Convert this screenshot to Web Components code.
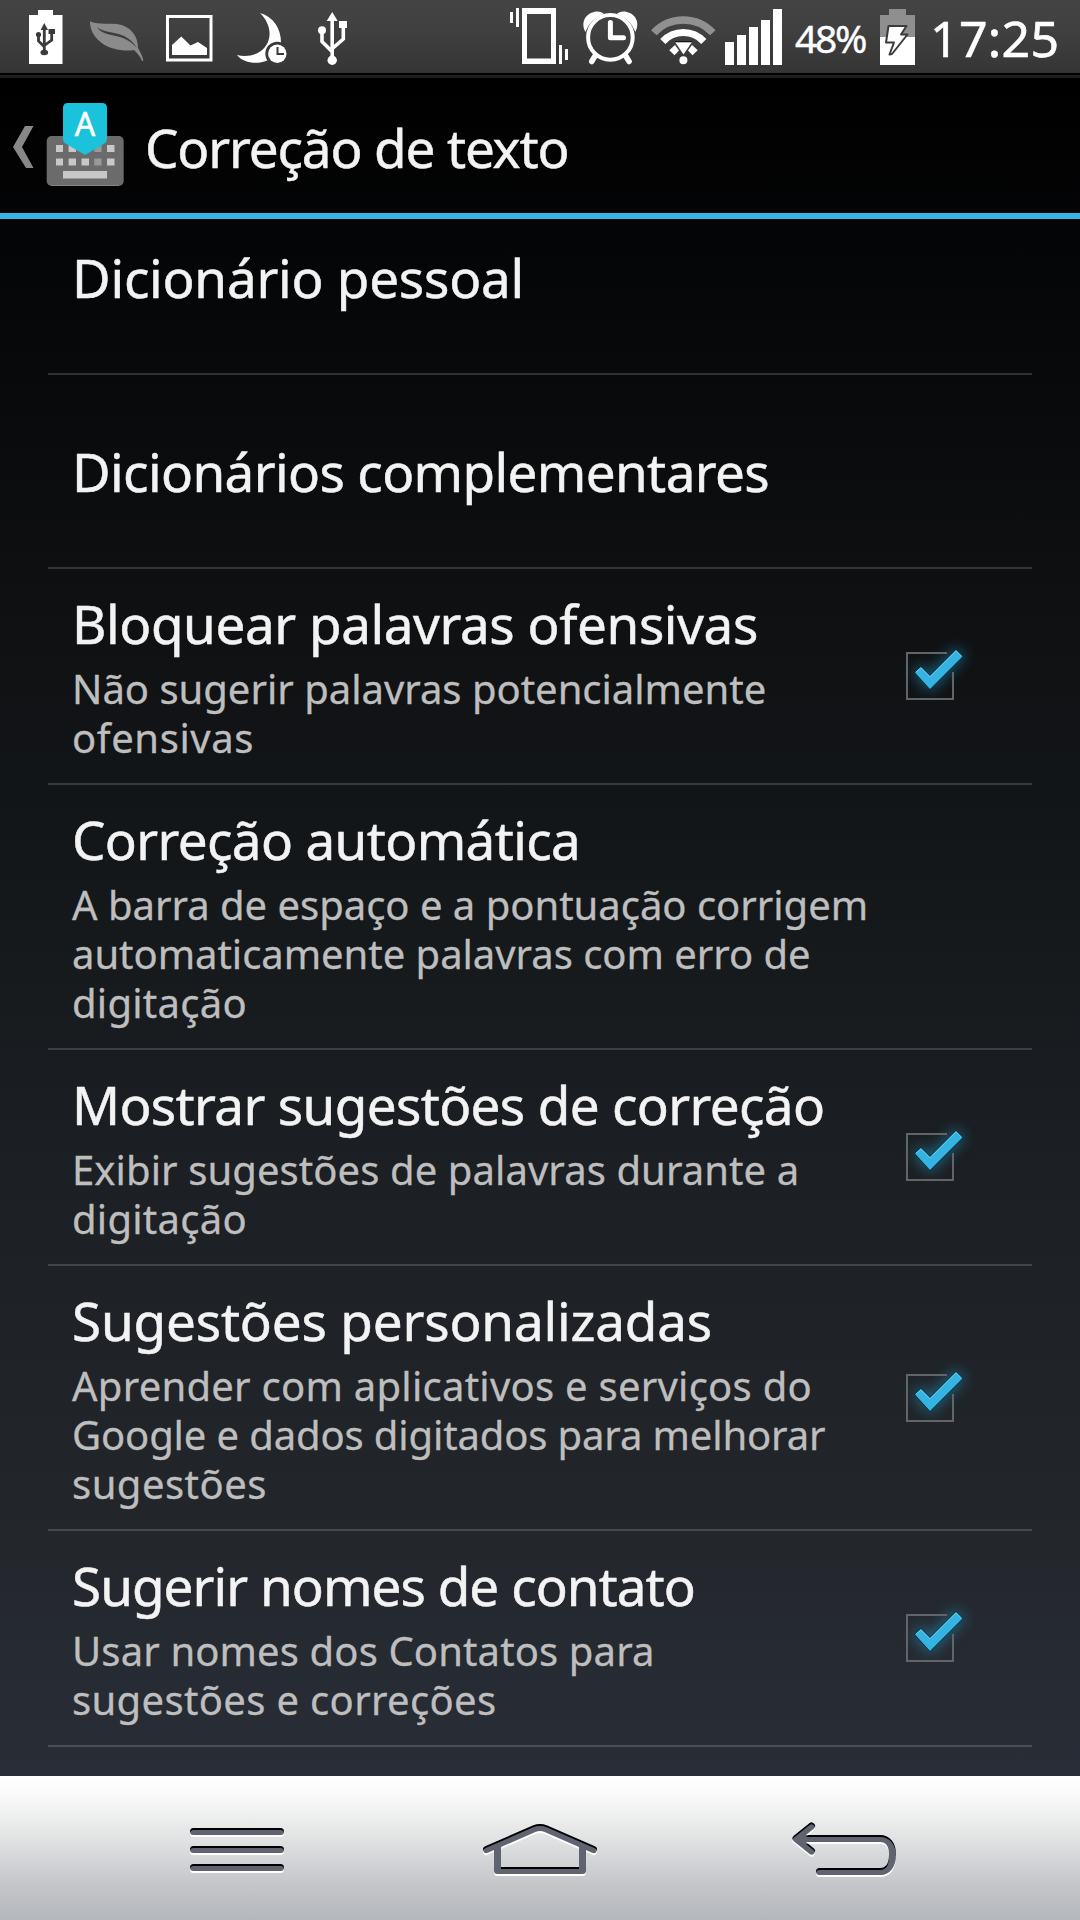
<!DOCTYPE html>
<html lang="pt-BR">
<head>
<meta charset="utf-8">
<title>Correção de texto</title>
<style>
  body{
    margin:0;
    width:1080px;
    height:1920px;
    overflow:hidden;
    background:#000;
    color:#f3f3f3;
    font-family:"Noto Sans", "Open Sans", sans-serif;
    --accent:#33b5e5;
    --muted:#bebebe;
  }
</style>
</head>
<body>
<settings-screen></settings-screen>

<script>
// One line of text, tracked so that its ink ends at the given x offset
class FitLine extends HTMLElement {
  constructor() {
    super();
    this.attachShadow({ mode: 'open' });
  }

  connectedCallback() {
    this.shadowRoot.innerHTML = /*html*/`
      <style>
        :host{ display:block; white-space:nowrap; }
      </style>
      <slot></slot>
    `;
    const text = this.textContent;
    const style = getComputedStyle(this);
    const ctx = document.createElement('canvas').getContext('2d');
    ctx.font = `${style.fontWeight} ${style.fontSize} ${style.fontFamily}`;
    const ink = ctx.measureText(text).actualBoundingBoxRight;
    const gap = (Number(this.getAttribute('end')) - ink) / (text.length - 1);
    this.style.letterSpacing = gap.toFixed(3) + 'px';
  }
}
customElements.define('fit-line', FitLine);

class StatusBar extends HTMLElement {
  constructor() {
    super();
    this.attachShadow({ mode: 'open' });
  }

  static get styles() {
    return /*css*/`
      :host{
        display:flex;
        height:80px;
        box-sizing:border-box;
        background:linear-gradient(#444 0, #404040 30px, #353535 73px, #000 73px, #000 75px, #1f1f1f 75px, #1f1f1f 78px, #000 78px);
        color:#fff;
      }
      svg{ display:block; height:73px; flex:none; fill:#fff; }
      .spacer{ flex:1; }
      .percent{ width:83px; font-size:39px; line-height:76px; padding-left:8px; box-sizing:border-box; -webkit-text-stroke:.4px; }
      .clock{ width:160px; font-size:50px; line-height:76px; padding-left:10px; box-sizing:border-box; -webkit-text-stroke:.6px; }
    `;
  }

  connectedCallback() {
    this.shadowRoot.innerHTML = /*html*/`
      <style>${StatusBar.styles}</style>
      <svg width="80" viewBox="0 0 80 73">
        <path d="M29 15H38V10H53V15H62.5V64H29Z"/>
        <g stroke="#3a3a3a" fill="none" stroke-width="2.8">
          <path d="M44.3 28V52M38.5 34V41L44 46.5M51.7 32V40L45 45"/>
        </g>
        <g fill="#3a3a3a">
          <path d="M44.3 23L48 30H40.6Z"/>
          <circle cx="38.5" cy="34.5" r="2.600"/>
          <rect x="48.5" y="29" width="6.5" height="5"/>
          <ellipse cx="44.3" cy="52.5" rx="3.8" ry="2.8"/>
        </g>
      </svg>
      <svg width="75" viewBox="80 0 75 73">
        <path fill="#8b8b8b" d="M90 21C96 25 107 23 117 24C130 26 138 35 138 48C140 52 143 56 143.300 61L142 61C140 56 137 53 134 50C125 51.500 110 50 100.500 42C93 36 90 29 90 21Z"/>
        <path fill="#3d3d3d" d="M97 27C104 33 114 31.500 124 36C130 39 134 43 137 48C130 41 126 38.500 118 36.500C109 34.500 101 33.500 97 27Z"/>
      </svg>
      <svg width="70" viewBox="155 0 70 73">
        <rect x="167.500" y="16.500" width="43.500" height="43.500" fill="none" stroke="#fff" stroke-width="3"/>
        <path d="M172 55V45L181.300 36.500L190.500 45.500L198 42L207 48V55Z"/>
      </svg>
      <svg width="75" viewBox="225 0 75 73">
        <path d="M260 13C274 17 281 29 281 43L274 58L267 60.500C257 65 243 63 237 55C249 58 262 54 267.500 43C272 33 269 22 260 13Z"/>
        <circle cx="277.300" cy="53.700" r="12" fill="#3a3a3a"/>
        <circle cx="277.300" cy="53.700" r="9.200"/>
        <path d="M277.500 47V54H284" fill="none" stroke="#3a3a3a" stroke-width="2"/>
      </svg>
      <svg width="70" viewBox="300 0 70 73">
        <path d="M332.200 18V60M322 30V41.500L331.500 51M343.300 26V39L333 48" fill="none" stroke="#fff" stroke-width="3.600"/>
        <path d="M332.200 12L337.700 21H326.700Z"/>
        <circle cx="322" cy="30.300" r="4"/>
        <rect x="339" y="21" width="8" height="7"/>
        <circle cx="332.200" cy="60.300" r="4.700"/>
      </svg>
      <div class="spacer"></div>
      <svg width="75" viewBox="500 0 75 73">
        <path fill-rule="evenodd" d="M522 8H556V64H522ZM527 14V58.500H551V14Z"/>
        <path d="M510 12H513V23H510ZM516 8H519V27H516ZM559 45H562V64H559ZM565 49H568V60H565Z"/>
      </svg>
      <svg width="70" viewBox="575 0 70 73">
        <path d="M585.500 32C580.500 23 585 14 594 12C598 11 602 12 604 14C595 17 589 23 585.500 32ZM635.300 32C640.300 23 635.800 14 626.800 12C622.800 11 618.800 12 616.800 14C625.800 17 631.800 23 635.300 32Z"/>
        <g fill="none" stroke="#fff">
          <circle cx="610.400" cy="37.400" r="22.300" stroke-width="4"/>
          <path d="M595 56L591.700 61.500M625.800 56L629.100 61.500" stroke-width="5.500" stroke-linecap="round"/>
          <path d="M610.400 22.500V37.700H623.500" stroke-width="5" stroke-linecap="round" stroke-linejoin="round"/>
        </g>
      </svg>
      <svg width="75" viewBox="645 0 75 73">
        <g fill="none" stroke="#fff" stroke-width="7">
          <path stroke="#909090" stroke-width="7.500" d="M653.800 32.800A40.300 40.300 0 0 1 712.800 32.800"/>
          <path d="M662.800 41.500A28 28 0 0 1 703.800 41.500"/>
        </g>
        <path d="M669.300 50.300L675 45L679 50.500L674.500 55.300ZM697.700 50.300L692 45L688 50.500L692.500 55.300Z"/>
        <path d="M675 42H692L683.500 54.500Z"/>
        <path d="M675 41.700H692" stroke="#111" stroke-width="1.200"/>
        <circle cx="683.400" cy="60.300" r="4"/>
      </svg>
      <svg width="67" viewBox="720 0 67 73">
        <path d="M725 42H734V65H725ZM737 35H746V65H737ZM749 27H758V65H749ZM761 20H770V65H761ZM773 9H782V65H773Z"/>
      </svg>
      <div class="percent"><fit-line end="71">48%</fit-line></div>
      <svg width="50" viewBox="870 0 50 73">
        <path fill="#8f8f8f" d="M880 15H889V9H906V15H915V37H880Z"/>
        <rect x="880" y="37" width="35" height="28"/>
        <path d="M888.500 26H906.500L901 34.500H907.500L892 54L889.500 54.500L894 42.500H886Z" stroke="#3c3c3c" stroke-width="2" stroke-linejoin="round"/>
      </svg>
      <div class="clock"><fit-line end="126.500">17:25</fit-line></div>
    `;
  }
}
customElements.define('status-bar', StatusBar);

class ActionBar extends HTMLElement {
  constructor() {
    super();
    this.attachShadow({ mode: 'open' });
  }

  static get styles() {
    return /*css*/`
      :host{
        display:flex;
        height:139px;
        box-sizing:border-box;
        border-bottom:6px solid var(--accent);
      }
      svg{ display:block; flex:none; }
      .title{
        font-size:53px;
        line-height:64px;
        padding-top:36px;
        -webkit-text-stroke:.5px;
      }
    `;
  }

  connectedCallback() {
    this.shadowRoot.innerHTML = /*html*/`
      <style>${ActionBar.styles}</style>
      <svg width="145" height="133" viewBox="0 80 145 133">
        <path fill="#888" d="M25 126H33.500L22 147L33.500 168H26L13 147Z"/>
        <rect x="46.700" y="136" width="77" height="50" rx="5" fill="#6b6b6b"/>
        <path d="M51 185.500H119" stroke="#858585"/>
        <g fill="#c8c8c8">
          <path d="M56 145H63V152H56ZM68.600 145H76V152H68.600ZM107 145H114.500V152H107Z"/>
          <path d="M56 158.500H63V165.500H56ZM68.600 158.500H76V165.500H68.600ZM81.500 158.500H89V165.500H81.500ZM107 158.500H114.500V165.500H107Z"/>
          <path fill="#999" d="M94.300 145H101.500V152H94.300ZM94.300 158.500H101.500V165.500H94.300Z"/>
          <rect x="63" y="171" width="44" height="7.500"/>
        </g>
        <path fill="#1bc2db" d="M68 103H102Q107 103 107 108V139Q107 142 104.500 143.500L85 155L65.500 143.500Q63 142 63 139V108Q63 103 68 103Z"/>
        <text x="85" y="136" text-anchor="middle" font-size="32" fill="#fff" stroke="#fff" stroke-width=".5">A</text>
      </svg>
      <div class="title"><slot></slot></div>
    `;
  }
}
customElements.define('action-bar', ActionBar);

class CheckBox extends HTMLElement {
  constructor() {
    super();
    this.attachShadow({ mode: 'open' });
  }

  connectedCallback() {
    this.shadowRoot.innerHTML = /*html*/`
      <style>
        :host{ display:block; width:48px; height:48px; padding-bottom:2px; }
        svg{ display:block; overflow:visible; }
        .glow{ filter:blur(7px); opacity:.6; }
      </style>
      <svg width="48" height="48" viewBox="0 0 48 48">
        <path class="glow" d="M9 20.500L15 15L24 24L50 -2L56.500 4.500L24 37Z" fill="#1e93bd" stroke="#1e93bd" stroke-width="4"/>
        <path d="M41 1H1V47H47V20" fill="none" stroke="#626466" stroke-width="2"/>
        <path d="M9 20.500L15 15L24 24L50 -2L56.500 4.500L24 37Z" fill="#35b3e2" stroke="#0b2a38" stroke-width="1.600" stroke-linejoin="round" paint-order="stroke"/>
        <path d="M10 20L15 15.800L24 24.800L50 -1.200L55 3.800" fill="none" stroke="#6fcdf0" stroke-width="1"/>
      </svg>
    `;
  }
}
customElements.define('check-box', CheckBox);

class PreferenceRow extends HTMLElement {
  constructor() {
    super();
    this.attachShadow({ mode: 'open' });
  }

  static get styles() {
    return /*css*/`
      :host{
        display:flex;
        align-items:center;
        justify-content:space-between;
        box-sizing:border-box;
        margin:0 48px;
        padding:23px 78px 21px 24px;
        border-bottom:2px solid rgba(255,255,255,.16);
      }
      :host([plain]){ padding-top:65px; padding-bottom:63px; }
      :host([first]){ padding-top:27px; }
      .title{ font-size:53px; line-height:64px; -webkit-text-stroke:.5px; }
      .summary{
        font-size:40px;
        line-height:49px;
        color:var(--muted);
        -webkit-text-stroke:.3px;
      }
      ::slotted(fit-line){ display:block; }
      .text{ width:0; }
      :host(:not([plain])) .title{ margin-bottom:8px; }
    `;
  }

  connectedCallback() {
    this.shadowRoot.innerHTML = /*html*/`
      <style>${PreferenceRow.styles}</style>
      <div class="text">
        <div class="title"><fit-line end="${this.getAttribute('end')}">${this.getAttribute('label')}</fit-line></div>
        <div class="summary"><slot></slot></div>
      </div>
      ${this.hasAttribute('checked') ? '<check-box></check-box>' : ''}
    `;
  }
}
customElements.define('preference-row', PreferenceRow);

class NavBar extends HTMLElement {
  constructor() {
    super();
    this.attachShadow({ mode: 'open' });
  }

  static get styles() {
    return /*css*/`
      :host{
        display:grid;
        grid-template-columns:repeat(3, 360px);
        height:144px;
        background:linear-gradient(#fff 0, #fcfcfc 14px, #e2e3e4 62px, #c5c6ca 108px, #b4b7bb 144px);
      }
      svg{ display:block; }
      .line{ fill:none; stroke-width:7; }
    `;
  }

  // engraved look: white lip below, dark inner edge on top
  icon(id, x, shape) {
    return /*html*/`
      <svg width="360" height="144" viewBox="${x} 1776 360 144">
        <mask id="${id}" maskUnits="userSpaceOnUse" x="${x}" y="1776" width="360" height="144">
          <g class="line" stroke="#fff">${shape}</g>
        </mask>
        <g class="line" stroke="#fff" transform="translate(0 2)">${shape}</g>
        <g mask="url(#${id})">
          <rect x="${x}" y="1776" width="360" height="144" fill="#000"/>
          <g class="line" stroke="#5f6470" transform="translate(0 2)">${shape}</g>
        </g>
      </svg>
    `;
  }

  connectedCallback() {
    this.shadowRoot.innerHTML = /*html*/`
      <style>${NavBar.styles}</style>
      ${this.icon('menu', 0, '<path stroke-linecap="round" d="M193.500 1831.500H280.500M193.500 1849.500H280.500M193.500 1867.500H280.500"/>')}
      ${this.icon('home', 360, '<path stroke-linecap="round" d="M486.500 1849.500L534 1828.700Q540 1826.500 546 1828.700L593.500 1849.500"/><path stroke-linejoin="round" d="M497.500 1847V1870.500H582.500V1847"/>')}
      ${this.icon('back', 720, '<path stroke-linecap="round" stroke-linejoin="round" d="M811.500 1826L796 1838.500L811.500 1851M799 1838.500H880C888 1838.500 892.500 1845 892.500 1854.500C892.500 1865 888 1871.500 880 1871.500H819.500"/><path d="M799 1836L806 1838.500L799 1841"/>')}
    `;
  }
}
customElements.define('nav-bar', NavBar);

class SettingsScreen extends HTMLElement {
  constructor() {
    super();
    this.attachShadow({ mode: 'open' });
  }

  static get styles() {
    return /*css*/`
      :host{
        display:flex;
        flex-direction:column;
        width:1080px;
        height:1920px;
        background:linear-gradient(#000 80px, #060709 300px, #0f1012 600px, #14181b 900px, #1c1f23 1170px, #22262a 1500px, #292d37 1776px);
      }
      main{ flex:1; overflow:hidden; }
      action-bar fit-line{ font-size:53px; }
    `;
  }

  connectedCallback() {
    this.shadowRoot.innerHTML = /*html*/`
      <style>${SettingsScreen.styles}</style>
      <status-bar></status-bar>
      <action-bar><fit-line end="422.500">Correção de texto</fit-line></action-bar>
      <main>
        <preference-row plain first label="Dicionário pessoal" end="448.500"></preference-row>
        <preference-row plain label="Dicionários complementares" end="695.200"></preference-row>
        <preference-row checked label="Bloquear palavras ofensivas" end="683.900">
          <fit-line end="692.700">Não sugerir palavras potencialmente</fit-line>
          <fit-line end="180.300">ofensivas</fit-line>
        </preference-row>
        <preference-row label="Correção automática" end="505">
          <fit-line end="793.700">A barra de espaço e a pontuação corrigem</fit-line>
          <fit-line end="737">automaticamente palavras com erro de</fit-line>
          <fit-line end="173.400">digitação</fit-line>
        </preference-row>
        <preference-row checked label="Mostrar sugestões de correção" end="750.900">
          <fit-line end="724.700">Exibir sugestões de palavras durante a</fit-line>
          <fit-line end="173.400">digitação</fit-line>
        </preference-row>
        <preference-row checked label="Sugestões personalizadas" end="637.800">
          <fit-line end="738.500">Aprender com aplicativos e serviços do</fit-line>
          <fit-line end="753">Google e dados digitados para melhorar</fit-line>
          <fit-line end="193.200">sugestões</fit-line>
        </preference-row>
        <preference-row checked label="Sugerir nomes de contato" end="621.700">
          <fit-line end="580">Usar nomes dos Contatos para</fit-line>
          <fit-line end="423">sugestões e correções</fit-line>
        </preference-row>
      </main>
      <nav-bar></nav-bar>
    `;
  }
}
customElements.define('settings-screen', SettingsScreen);
</script>
</body>
</html>
